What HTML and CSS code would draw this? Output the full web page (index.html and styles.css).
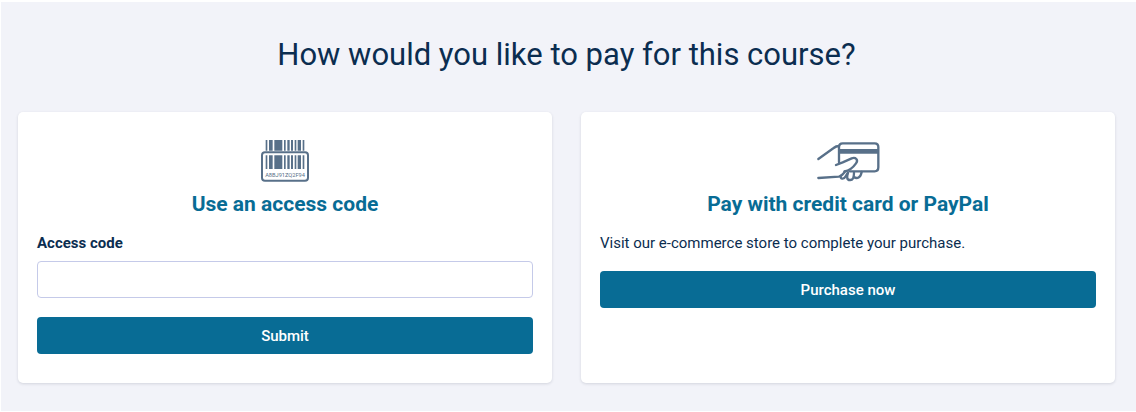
FILE: index.html
```html
<!DOCTYPE html>
<html lang="en">
<head>
<meta charset="utf-8">
<meta name="viewport" content="width=device-width, initial-scale=1">
<title>Course payment</title>
<link rel="stylesheet" href="styles.css">
</head>
<body>
<main class="payment">
  <h1 class="payment-title">How would you like to pay for this course?</h1>
  <div class="options">
    <section class="card">
      <svg class="card-icon" viewBox="-3 -1 150 132" width="50" height="44" aria-hidden="true">
        <g fill="#587089">
          <path d="M14 2h5v32h-5zM24 2h11v32h-11zM40 2h24v32h-24zM69 2h5v32h-5zM79 2h7v32h-7zM90 2h6v32h-6zM101 2h5v32h-5zM110 2h10v32h-10zM125 2h5v32h-5z"/>
          <path d="M14 48h5v41h-5zM24 48h11v41h-11zM40 48h24v41h-24zM69 48h5v41h-5zM79 48h7v41h-7zM90 48h6v41h-6zM101 48h5v41h-5zM110 48h10v41h-10zM125 48h5v41h-5z"/>
          <text class="barcode-text" x="72" y="114" text-anchor="middle">A8BJ91ZQ2F94</text>
        </g>
        <rect x="3" y="39" width="138" height="85" rx="9" fill="none" stroke="#587089" stroke-width="6"/>
      </svg>
      <h2 class="card-title">Use an access code</h2>
      <form class="code-form">
        <label class="field-label" for="code">Access code</label>
        <input class="field-input" id="code" name="code" type="text">
        <button class="button" type="submit">Submit</button>
      </form>
    </section>
    <section class="card">
      <svg class="card-icon" viewBox="0 -4 195 132" width="65" height="44" aria-hidden="true">
        <g fill="none" stroke="#587089" stroke-width="7" stroke-linecap="round" stroke-linejoin="round">
          <path d="M69 66V20q0-11 11-11h96q11 0 11 11v61q0 12-11 12h-74"/>
          <path d="M7 56L53 23q7-6 16-6"/>
          <path d="M60 74l20-8 27-12c12-4 21 4 13 15-9 13-18 22-35 24"/>
          <path d="M7 113l61-4c9-1 14-10 20-16"/>
          <path d="M74 106c-2 11 10 12 15 2l7-12M96 98c-4 12-4 22 7 21 10 0 11-12 11-22M114 110c9 7 20 2 23-15"/>
        </g>
        <path d="M69 26h118v14H69z" fill="#587089"/>
      </svg>
      <h2 class="card-title">Pay with credit card or PayPal</h2>
      <p class="card-text">Visit our e-commerce store to complete your purchase.</p>
      <button class="button" type="button">Purchase now</button>
    </section>
  </div>
</main>
</body>
</html>
```
FILE: styles.css
```css
* {
  box-sizing: border-box;
}

body {
  margin: 0;
  padding: 2px 0 1px 1px;
  background: #fff;
  color: #0b2d50;
  font-family: Roboto, "Liberation Sans", sans-serif;
  font-size: 15px;
  line-height: 20px;
}

.payment {
  padding: 32px 21px 28px 17px;
  background: #f2f3f9;
}

.payment-title {
  margin: 0 0 36px;
  font-size: 31px;
  font-weight: 400;
  line-height: 42px;
  text-align: center;
}

.options {
  display: grid;
  grid-template-columns: 1fr 1fr;
  gap: 29px;
}

.card {
  padding: 27px 19px 29px;
  border-radius: 5px;
  background: #fff;
  box-shadow: 0 1px 3px rgba(20, 30, 60, 0.14);
}

.card-icon {
  display: block;
  margin: 0 auto 8px;
}

.barcode-text {
  font-size: 17px;
}

.card-title {
  margin: 0 0 16px;
  color: #086c95;
  font-size: 21px;
  font-weight: 700;
  line-height: 26px;
  text-align: center;
}

.card-text {
  margin: 0 0 18px;
}

.code-form {
  display: flex;
  flex-direction: column;
}

.field-label {
  margin-bottom: 8px;
  font-weight: 700;
}

.field-input {
  width: 100%;
  height: 37px;
  margin-bottom: 19px;
  padding: 0 10px;
  border: 1px solid #c5cae9;
  border-radius: 4px;
  background: #fff;
  color: inherit;
  font: inherit;
}

.button {
  display: block;
  width: 100%;
  height: 37px;
  padding: 0 16px;
  border: 0;
  border-radius: 4px;
  background: #086c95;
  color: #fff;
  font: inherit;
  font-weight: 500;
  cursor: pointer;
}
```
